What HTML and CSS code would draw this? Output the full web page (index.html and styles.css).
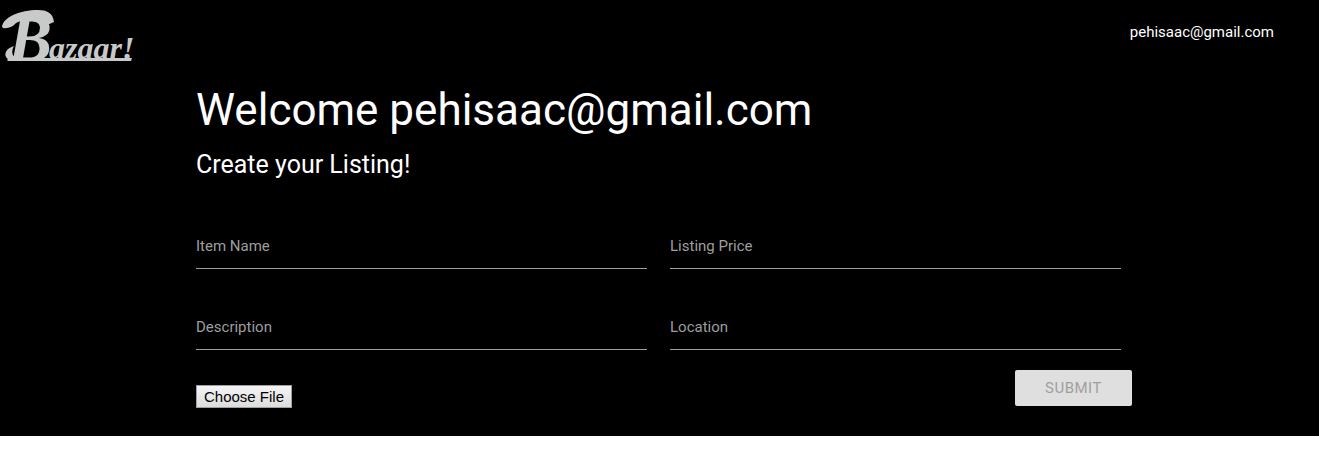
FILE: index.html
```html
<!DOCTYPE html>
<html lang="en">
<head>
<meta charset="utf-8">
<title>Bazaar! - Create your Listing</title>
<link rel="stylesheet" href="styles.css">
</head>
<body>
<div class="page">
  <header class="topbar">
    <a class="brand" href="#" aria-label="Bazaar! home">
      <svg class="logo" width="144" height="80" viewBox="0 0 144 80">
        <path class="swash" d="M2 27C3 17 20 10 38 10C47 10 53 13 54 22L47 25C44 17 26 18 16 23C13 27 5 30 2 27Z"/>
        <text class="logo-initial" x="8" y="61">B</text>
        <text class="logo-rest" x="49" y="59">azaar!</text>
        <path class="swash" d="M14 46C7 48 4 53 6 57C8 60 11 61 16 61L131 61L132 58L16 58C12 56 11 51 14 46Z"/>
      </svg>
    </a>
    <a class="account" href="#">pehisaac@gmail.com</a>
  </header>
  <main class="content">
    <h1 class="title">Welcome pehisaac@gmail.com</h1>
    <h2 class="subtitle">Create your Listing!</h2>
    <form class="listing">
      <div class="fields">
        <div class="field"><label for="item">Item Name</label><input id="item" type="text"></div>
        <div class="field"><label for="price">Listing Price</label><input id="price" type="text"></div>
        <div class="field"><label for="description">Description</label><input id="description" type="text"></div>
        <div class="field"><label for="location">Location</label><input id="location" type="text"></div>
      </div>
      <div class="actions">
        <button class="choose" type="button">Choose File</button>
        <button class="submit" type="submit" disabled>SUBMIT</button>
      </div>
    </form>
  </main>
</div>
</body>
</html>
```
FILE: styles.css
```css
* { box-sizing: border-box; }
body {
  margin: 0;
  background: #fff;
  color: #fff;
  font-family: Roboto, sans-serif;
  font-size: 15px;
}
.page { background: #000; padding-bottom: 28px; }
.topbar {
  display: flex;
  justify-content: space-between;
  height: 64px;
  padding-right: 45px;
}
.brand { display: block; height: 80px; }
.logo { display: block; }
.swash, .logo-initial, .logo-rest { fill: #c8caca; }
.logo-initial, .logo-rest {
  font-family: "Liberation Serif", serif;
  font-style: italic;
  font-weight: bold;
}
.logo-initial { font-size: 66px; }
.logo-rest { font-size: 32px; }
.account { color: #fff; text-decoration: none; line-height: 64px; }
.content { padding: 0 198px 0 196px; }
.title {
  margin: 20px 0 0;
  font-size: 44px;
  font-weight: 400;
  line-height: 52px;
}
.subtitle {
  margin: 16px 0 0;
  font-size: 25px;
  font-weight: 400;
  line-height: 26px;
}
.fields {
  display: grid;
  grid-template-columns: 1fr 1fr;
  gap: 36px 23px;
  margin-top: 46px;
}
.field { display: grid; }
.field label, .field input { grid-area: 1 / 1; }
.field label {
  padding-top: 12px;
  color: #9e9e9e;
  line-height: 20px;
  pointer-events: none;
}
.field input {
  width: 100%;
  height: 45px;
  padding: 0;
  border: 0;
  border-bottom: 1px solid #9e9e9e;
  border-radius: 0;
  outline: 0;
  background: transparent;
  color: #fff;
  font: inherit;
}
.actions {
  display: flex;
  justify-content: space-between;
  align-items: flex-start;
  margin: 20px -11px 0 0;
}
.choose {
  height: 23px;
  margin-top: 15px;
  padding: 0 7px;
  border: 1px solid #a0a0a0;
  background: linear-gradient(#f5f5f5, #dcdcdc);
  color: #000;
  font: 15px/20px "Liberation Sans", sans-serif;
}
.submit {
  width: 117px;
  height: 36px;
  padding: 0;
  border: 0;
  border-radius: 2px;
  background: #dfdfdf;
  color: #9f9f9f;
  font: 15px/36px Roboto, sans-serif;
  letter-spacing: 0.5px;
}
```
